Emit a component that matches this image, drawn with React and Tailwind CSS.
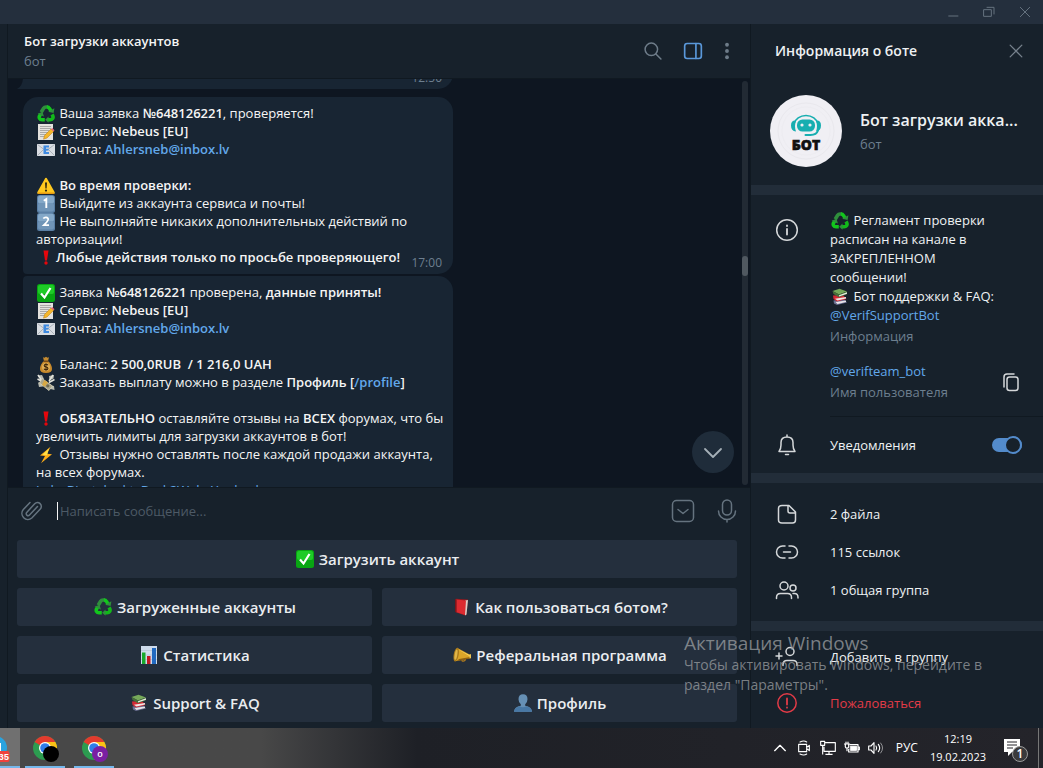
import React from "react";

const glyphs = {
  recycle: (
    <g fill="none" strokeWidth="3.6">
      <path d="M4.2 7.2 6.6 3.2Q7.4 2 9 2h2" stroke="#2f8f3c" />
      <path d="M10 2q1.6 0 2.6 1.6l1.7 2.8" stroke="#12c61c" />
      <path d="M15 9.5l.8 1.4q.7 1.5-.3 2.9-.7 1-2.3 1H10.6" stroke="#12b81a" />
      <path d="M7.8 14.8H5q-1.700 0-2.500-1.500-.6-1.200.1-2.500l1-1.700" stroke="#12c61c" />
      <path d="M11.500 11.500v6.300L8.200 14.700z" fill="#2f8f3c" stroke="none" />
      <path d="M11.200 6.800l5.400 1.300.8-4.800z" fill="#2f8f3c" stroke="none" />
      <path d="M.6 8.700 5.500 6.700l1.400 4.700z" fill="#2f8f3c" stroke="none" />
    </g>
  ),
  memo: (
    <>
      <path d="M1 1h15v16H1z" fill="#e4e2de" />
      <path d="M3 3.500h11M3 5.500h11M3 7.500h9M3 9.500h8M3 11.500h6M3 13.500h5" stroke="#9a9a9a" strokeWidth=".8" />
      <path d="M7.500 12.500 14 6l2.500 2.500L10 15l-3.500 1.200z" fill="#f5b62b" stroke="#b87a12" strokeWidth=".5" />
      <path d="M14 6l1.300-1 2.200 2.200-1 1.300z" fill="#e2647a" />
    </>
  ),
  mail: (
    <>
      <path d="M0 3h18v12H0z" fill="#d9dde2" />
      <path d="M.5 3.500 9 10l8.500-6.500M.5 14.500l6-6M17.500 14.500l-6-6" stroke="#9fa6ae" fill="none" strokeWidth=".8" />
      <path d="M6.500 4.500h5.500v2H9v1.200h2.600v1.900H9v1.300h3v2H6.500z" fill="#3f8ae0" />
    </>
  ),
  warning: (
    <>
      <path d="M9 .8Q9.800.8 10.300 2l7.300 13q.7 2-1 2H1.400q-1.700 0-1-2L7.700 2Q8.200.8 9 .8z" fill="#ffc81e" />
      <path d="M1 15.500h16L17 17H1z" fill="#e69a10" />
      <path d="M8 5.500h2l-.4 6H8.400z" fill="#2b2410" />
      <circle cx="9" cy="13.600" r="1.100" fill="#2b2410" />
    </>
  ),
  one: (
    <>
      <rect width="18" height="18" rx="2.500" fill="#5a7fa5" />
      <rect x="1" y=".8" width="16" height="8" rx="2" fill="#84a8c8" />
      <rect x="1" y="8" width="16" height="8.500" rx="2" fill="#7095b8" />
      <path d="M6.800 5.800 9.300 4v9" fill="none" stroke="#fff" strokeWidth="1.900" />
    </>
  ),
  two: (
    <>
      <rect width="18" height="18" rx="2.500" fill="#5a7fa5" />
      <rect x="1" y=".8" width="16" height="8" rx="2" fill="#84a8c8" />
      <rect x="1" y="8" width="16" height="8.500" rx="2" fill="#7095b8" />
      <path d="M6.300 5.500Q7.300 4.200 9 4.300q2.300.2 2.200 2.200Q11.100 8 6.800 12.200H12" fill="none" stroke="#fff" strokeWidth="1.700" />
    </>
  ),
  bang: (
    <>
      <path d="M6.500 1.500h5L10 11.500H8z" fill="#e5060c" />
      <circle cx="9" cy="14" r="1.700" fill="#e5060c" />
    </>
  ),
  check: (
    <>
      <rect width="18" height="18" rx="2.500" fill="#08a512" />
      <rect x="1" y="1" width="16" height="9" rx="2" fill="#1ecb27" />
      <path d="M4 9.500 7.500 13.500 13.500 4" fill="none" stroke="#fff" strokeWidth="2.200" />
    </>
  ),
  money: (
    <>
      <path d="M6 1.200 7.500 1.700 9 .8l1.500.9L12 1.200 11 5H7z" fill="#c58b30" />
      <path d="M7 5h4q4 3.500 4 8 0 4-6 4t-6-4q0-4.500 4-8z" fill="#c88a2c" />
      <path d="M6.500 5.200h5" stroke="#684018" strokeWidth="1.300" />
      <circle cx="9" cy="11" r="4" fill="#e0ae55" />
      <path d="M11 9.300q-.5-1-2-1-1.800 0-1.800 1.300T9 11t1.900 1.400Q10.900 13.700 9 13.700q-1.600 0-2-1M9 7.300v7.400" fill="none" stroke="#42290c" strokeWidth="1.100" />
    </>
  ),
  wings: (
    <>
      <path d="M.5 1.500 5 1l2 4-3 1zM12 2l5-1-.5 3.500-4 2zM1 8.500l4 0 1 4-4 .5zM12 11l5 1 .5 4-4-1z" fill="#b9bbb0" />
      <path d="M1 1l4 6M16 1l-4 6M.5 5 6 8M17.500 5.500 12 8.500" stroke="#e3e3dc" strokeWidth="1.500" />
      <path d="M5 4.500 15.500 12 12 16.500 2.500 9z" fill="#a9a58c" stroke="#d9d5bd" strokeWidth=".8" />
      <path d="M7.300 6 5 10.800l2.800 2 3.400-4.200z" fill="#d6a945" />
      <circle cx="10.800" cy="11.800" r="1.600" fill="#6f6a50" />
    </>
  ),
  zap: (
    <>
      <path d="M13.500.8 3 9.600l5 .5L4 17.300 15 8.200l-5-.4z" fill="#ffae17" />
      <path d="M12 2.500 5.500 8.700l4.500.6z" fill="#ffe04a" />
    </>
  ),
  books: (
    <>
      <path d="M2.500 12.500 13 11l3 3.500L6 17 3 15.500z" fill="#6a6f91" />
      <path d="M4.500 14 15 12.500v1.500L6.500 16z" fill="#e9e6ea" />
      <path d="M2 7.500 12 7l3.500 4L6 13.500 2.500 11z" fill="#d32a35" />
      <path d="M4 10.800 15 9v1.600l-8.500 2z" fill="#f2e7e4" />
      <path d="M1.500 3 8.500.8 16 3.500 8 6.500z" fill="#76a95a" />
      <path d="M1.500 3 8 6.500 16 3.500v2.700L8 9.200 2.500 6z" fill="#47703a" />
      <path d="M8 7.200 16 4.300v1.500L8 8.600z" fill="#e9eee3" />
    </>
  ),
  book: (
    <>
      <path d="M3 1.500 4 .8l12 .7-1.500 15L13 17.500 3 14z" fill="#8e1a20" />
      <path d="M13 2.500 16 2l-1.500 14.500L13 17.500z" fill="#d9cfc8" />
      <path d="M4 1.500 14 2.500 13 17 4 14z" fill="#dc2a30" />
      <path d="M4 1.500v12.500" stroke="#6b1015" />
    </>
  ),
  chart: (
    <>
      <path d="M1 0h16v18H1z" fill="#cfdcec" />
      <path d="M1 4.500h16M1 9h16M1 13.500h16" stroke="#aebed2" strokeWidth=".6" />
      <path d="M2 6.500h3.500V18H2z" fill="#18a82c" />
      <path d="M7 10h3.500v8H7z" fill="#c21723" />
      <path d="M12 2h4v16h-4z" fill="#2169c0" />
    </>
  ),
  horn: (
    <>
      <path d="M9 11.500v3.200q1.500 1 3.200-.6v-2" fill="none" stroke="#b07a1e" strokeWidth="1.300" />
      <path d="M4 1.800 17.500 9v3L2.500 15.300Z" fill="#dba528" />
      <path d="M4.500 3 17 9.500l.2 1z" fill="#ffe474" />
      <path d="M6 13 17.500 11v1.500L4 15z" fill="#8d5f12" />
      <ellipse cx="3.200" cy="8.600" rx="2.500" ry="7" fill="#a8791b" transform="rotate(10 3.200 8.600)" />
      <ellipse cx="3" cy="8.700" rx="1.300" ry="5.200" fill="#e0b548" transform="rotate(10 3 8.700)" />
      <path d="M16.500 8.300h1.500v4h-1.500z" fill="#efc550" />
    </>
  ),
  person: (
    <>
      <path d="M9 .2q4.500 0 4.500 5 0 3-2.300 5v1.600q6.500 1 6.800 6H0q.3-5 6.800-6v-1.600q-2.300-2-2.300-5 0-5 4.500-5z" fill="#6690b5" />
      <path d="M0 17.800q.3-4 5.500-5.500 3.500 2 7 0 5.200 1.500 5.500 5.500z" fill="#4878a5" />
    </>
  ),
};

function Emoji({ name }) {
  return (
    <svg viewBox="0 0 18 18" aria-hidden="true" className="mx-px -my-1 inline-block size-[18px] shrink-0 align-[-1px]">
      {glyphs[name]}
    </svg>
  );
}

function Icon({ children, className = "", size = "size-6" }) {
  return (
    <svg viewBox="0 0 24 24" aria-hidden="true" fill="none" stroke="currentColor" strokeWidth="1.500" strokeLinecap="round" strokeLinejoin="round" className={`block shrink-0 ${size} ${className}`}>
      {children}
    </svg>
  );
}

function Link({ children }) {
  return <a href="#" className="text-[#62a8ea]">{children}</a>;
}

function B({ children }) {
  return <b className="font-semibold">{children}</b>;
}

function Line({ children }) {
  return <div className="h-[18px] whitespace-pre">{children}</div>;
}

function TitleBar() {
  return (
    <div className="flex h-6 shrink-0 items-center justify-end bg-[#242f3d] text-[#65727f]">
      <button aria-label="Свернуть" className="flex w-9 justify-center">
        <Icon size="size-4"><path d="M5 18h15" strokeLinecap="butt" /></Icon>
      </button>
      <button aria-label="Развернуть" className="flex w-9 justify-center">
        <Icon size="size-4"><path d="M4.500 8.500h11v10h-11zM9 5h10.500v10" /></Icon>
      </button>
      <button aria-label="Закрыть" className="flex w-9 justify-center">
        <Icon size="size-4"><path d="m5 5 14 14M19 5 5 19" /></Icon>
      </button>
    </div>
  );
}

function ChatHeader() {
  return (
    <header className="flex h-[55px] shrink-0 items-center border-b border-[#101921] bg-[#17212b] pr-[9px] pl-4">
      <div className="min-w-0 flex-1 leading-5">
        <h1 className="font-semibold">Бот загрузки аккаунтов</h1>
        <p className="text-[#6d7f8f]">бот</p>
      </div>
      <div className="flex items-center text-[#6e7c89]">
        <button aria-label="Поиск" className="flex w-10 justify-center">
          <Icon size="size-5"><circle cx="10" cy="10" r="7.500" strokeWidth="1.800" /><path d="m15.500 15.500 6 6" strokeWidth="1.800" /></Icon>
        </button>
        <button aria-label="Боковая панель" className="flex w-10 justify-center text-[#5a98da]">
          <Icon size="size-5"><rect x="2" y="3" width="20" height="18" rx="3" strokeWidth="2" /><path d="M15.500 3v18" strokeWidth="2" /></Icon>
        </button>
        <button aria-label="Меню" className="flex w-7 justify-center">
          <Icon size="size-5"><g fill="currentColor" stroke="none"><circle cx="12" cy="4.500" r="2.300" /><circle cx="12" cy="12" r="2.300" /><circle cx="12" cy="19.500" r="2.300" /></g></Icon>
        </button>
      </div>
    </header>
  );
}

function Time({ children }) {
  return <time className="absolute right-[11px] bottom-[3px] text-[12px] leading-4 text-[#6d7f8f]">{children}</time>;
}

function Messages() {
  return (
    <div className="relative flex min-h-0 flex-1 bg-[#0e1621]">
      <div className="h-0 min-h-full min-w-0 flex-1 overflow-hidden pl-[15px]">
        <article className="relative -mt-[30px] h-10 w-[430px] rounded-br-[15px] bg-[#182533]">
          <svg viewBox="0 0 6 12" aria-hidden="true" className="absolute bottom-0 -left-1.5 h-3 w-1.5"><path d="M6 0Q6 9 0 12H6z" fill="#182533" /></svg>
          <Time>12:50</Time>
        </article>
        <article className="relative mt-2 w-[430px] rounded-[15px] rounded-bl-[4px] bg-[#182533] px-[13px] pt-[7px] pb-2">
          <Line><Emoji name="recycle" /> Ваша заявка <B>№648126221</B>, проверяется!</Line>
          <Line><Emoji name="memo" /> Сервис: <B>Nebeus [EU]</B></Line>
          <Line><Emoji name="mail" /> Почта: <B><Link>Ahlersneb@inbox.lv</Link></B></Line>
          <Line />
          <Line><Emoji name="warning" /> <B>Во время проверки:</B></Line>
          <Line><Emoji name="one" /> Выйдите из аккаунта сервиса и почты!</Line>
          <Line><Emoji name="two" /> Не выполняйте никаких дополнительных действий по</Line>
          <Line>авторизации!</Line>
          <Line><Emoji name="bang" /><B>Любые действия только по просьбе проверяющего!</B></Line>
          <Time>17:00</Time>
        </article>
        <article className="mt-0.5 w-[430px] rounded-[15px] rounded-tl-[4px] bg-[#182533] px-[13px] pt-[7px] pb-2">
          <Line><Emoji name="check" /> Заявка <B>№648126221</B> проверена, <B>данные приняты!</B></Line>
          <Line><Emoji name="memo" /> Сервис: <B>Nebeus [EU]</B></Line>
          <Line><Emoji name="mail" /> Почта: <B><Link>Ahlersneb@inbox.lv</Link></B></Line>
          <Line />
          <Line><Emoji name="money" /> Баланс: <B>2 500,0RUB  / 1 216,0 UAH</B></Line>
          <Line><Emoji name="wings" /> Заказать выплату можно в разделе <B>Профиль [<Link>/profile</Link>]</B></Line>
          <Line />
          <Line><Emoji name="bang" /> <B>ОБЯЗАТЕЛЬНО</B> оставляйте отзывы на <B>ВСЕХ</B> форумах, что бы</Line>
          <Line>увеличить лимиты для загрузки аккаунтов в бот!</Line>
          <Line><Emoji name="zap" /> Отзывы нужно оставлять после каждой продажи аккаунта,</Line>
          <Line>на всех форумах.</Line>
          <Line><Link>Lolz</Link>, <Link>Bigstalnokt</Link>, <Link>Dark2Web</Link>, <Link>Youhack</Link></Line>
        </article>
      </div>
      <div className="mt-0.5 mr-0.5 mb-0.5 w-1.5 rounded-full bg-[#222a34] pt-[175px]">
        <div className="h-5 w-full rounded-full bg-[#505860]" />
      </div>
      <button aria-label="Вниз" className="absolute right-4 bottom-3.5 flex size-[42px] items-center justify-center rounded-full bg-[#1f2c3a] text-[#a6b0b8]">
        <Icon><path d="m4 9 8 8 8-8" strokeWidth="1.800" /></Icon>
      </button>
    </div>
  );
}

function Composer() {
  return (
    <div className="flex h-[53px] shrink-0 items-center border-t border-[#101921] bg-[#17212b] pr-[11px] pb-1.5 pl-3 text-[#65737f]">
      <button aria-label="Прикрепить файл" className="mr-[13px]">
        <Icon><path d="m17.500 7.500-8 8.500a1.900 1.900 0 0 1-2.800-2.600l8-8.600a3.800 3.800 0 0 1 5.600 5.200L11.800 19a6 6 0 0 1-8.500-8.400L10 3.500" /></Icon>
      </button>
      <span className="h-[18px] w-px bg-[#f5f5f5]" />
      <input aria-label="Написать сообщение" placeholder="Написать сообщение..." className="ml-0.5 min-w-0 flex-1 bg-transparent outline-none placeholder:text-[#4d5a66]" />
      <button aria-label="Команды" className="mr-5">
        <Icon><rect x="1.500" y="1.500" width="21" height="21" rx="4" /><path d="m7 10.500 5 4 5-4" /></Icon>
      </button>
      <button aria-label="Голосовое сообщение">
        <Icon><rect x="7.500" y="1" width="9" height="15" rx="4.500" /><path d="M3.500 12a8.500 8.500 0 0 0 17 0M12 20.500V23" /></Icon>
      </button>
    </div>
  );
}

const keys = [
  ["recycle", "Загруженные аккаунты"],
  ["book", "Как пользоваться ботом?"],
  ["chart", "Статистика"],
  ["horn", "Реферальная программа"],
  ["books", "Support & FAQ"],
  ["person", "Профиль"],
];

function Key({ emoji, label, wide }) {
  return (
    <button className={`flex h-[38px] items-center justify-center gap-1 rounded-[3px] bg-[#242f3d] text-[15px] font-semibold text-[#eaedf0] ${wide ? "col-span-2" : ""}`}>
      <Emoji name={emoji} />
      <span className="whitespace-nowrap">{label}</span>
    </button>
  );
}

function Keyboard() {
  return (
    <div className="grid shrink-0 grid-cols-2 gap-2.5 bg-[#17212b] pr-[13px] pb-1.5 pl-[9px]">
      <Key emoji="check" label="Загрузить аккаунт" wide />
      {keys.map(([emoji, label]) => <Key key={label} emoji={emoji} label={label} />)}
    </div>
  );
}

function Row({ icon, children, className = "" }) {
  return (
    <button className={`flex w-full items-center gap-[31px] pl-6 text-left ${className}`}>
      {icon}
      <span>{children}</span>
    </button>
  );
}

function Avatar() {
  return (
    <svg viewBox="0 0 72 72" role="img" aria-label="БОТ" className="size-[72px] shrink-0">
      <circle cx="36" cy="36" r="36" fill="#f0eff4" />
      <circle cx="36" cy="36" r="28" fill="none" stroke="#e9e8ed" />
      <circle cx="36" cy="36" r="24" fill="none" stroke="#edecf1" />
      <path d="M24 29a12.200 10.300 0 0 1 24 0" fill="none" stroke="#17aeb0" strokeWidth="1.600" />
      <rect x="27" y="24.500" width="18" height="12" rx="5.500" fill="#17aeb0" />
      <circle cx="32" cy="30" r="1.600" fill="#f0eff4" /><circle cx="40" cy="30" r="1.600" fill="#f0eff4" />
      <path d="M26 25.500q-5-.5-5 5t5 6q-2-5.500 0-11zM46 25.500q5-.5 5 5t-5 6q2-5.500 0-11z" fill="#17aeb0" />
      <path d="M48 35.500q-1.500 4.500-7.500 4.500h-5" fill="none" stroke="#17aeb0" strokeWidth="2" strokeLinecap="round" />
      <text x="36" y="55" textAnchor="middle" stroke="#111" strokeWidth=".6" className="fill-[#111] font-['Open_Sans'] text-[14px] font-extrabold">БОТ</text>
    </svg>
  );
}

function Divider() {
  return <div className="h-2.5 shrink-0 bg-[#222d39]" />;
}

function InfoPanel() {
  return (
    <aside className="flex w-[293px] shrink-0 flex-col border-l border-[#101921] bg-[#17212b] text-[#eef1f3]">
      <div className="flex h-[53px] items-center pr-[17px] pl-6">
        <h2 className="flex-1 text-[14px] font-semibold">Информация о боте</h2>
        <button aria-label="Закрыть панель" className="text-[#77828d]">
          <Icon size="size-5"><path d="m5 5 14 14M19 5 5 19" /></Icon>
        </button>
      </div>
      <div className="flex h-[108px] items-start gap-[18px] pt-[18px] pl-[19px]">
        <Avatar />
        <div className="min-w-0 flex-1 pt-3">
          <h3 className="text-[16px] leading-[26px] font-semibold">Бот загрузки акка...</h3>
          <p className="leading-[22px] text-[#6d7f8f]">бот</p>
        </div>
      </div>
      <Divider />
      <section className="flex gap-[31px] pt-4 pl-6">
        <Icon className="mt-[7px] text-[#d5d8da]"><circle cx="12" cy="12" r="10.300" /><path d="M12 11v5.500M12 7.500v.5" strokeWidth="1.800" /></Icon>
        <div className="min-w-0 flex-1">
          <p className="whitespace-pre leading-[19px]"><Emoji name="recycle" /> Регламент проверки{"\n"}расписан на канале в{"\n"}ЗАКРЕПЛЕННОМ{"\n"}сообщении!{"\n"}<Emoji name="books" /> Бот поддержки &amp; FAQ:{"\n"}<Link>@VerifSupportBot</Link></p>
          <p className="leading-[23px] text-[#6d7f8f]">Информация</p>
          <div className="mt-[13px] flex items-center border-b border-[#101921] pr-5 pb-[13px]">
            <div className="flex-1 leading-[21px]">
              <Link>@verifteam_bot</Link>
              <p className="text-[#6d7f8f]">Имя пользователя</p>
            </div>
            <button aria-label="Копировать" className="text-[#d5d8da]">
              <Icon><rect x="8" y="7" width="11" height="13.500" rx="2.500" /><path d="M5 17V7q0-3 3-3h7" /></Icon>
            </button>
          </div>
        </div>
      </section>
      <label className="flex h-14 shrink-0 items-center pr-[21px] pl-6">
        <Icon className="mr-[31px] text-[#d5d8da]"><path d="M4 18.500Q6 16 6 12V9.500Q6 4 12 4t6 5.500V12q0 4 2 6.500zM12 4V2M10.500 21.500h3" /></Icon>
        <span className="flex-1">Уведомления</span>
        <input type="checkbox" defaultChecked className="peer sr-only" />
        <span className="flex h-[14px] w-[30px] items-center justify-end rounded-full bg-[#538bcb]">
          <span className="size-[18px] shrink-0 rounded-full border-2 border-[#538bcb] bg-[#17212b]" />
        </span>
      </label>
      <Divider />
      <nav className="flex h-[138px] shrink-0 flex-col pt-3">
        <Row className="h-[38px]" icon={<Icon className="text-[#d5d8da]"><path d="M7 3.500h7L20.500 10v8q0 3-3 3H7q-3.500 0-3.500-3V6.500q0-3 3.500-3zM13 3.500V9q0 2 2 2h5.500" /></Icon>}>2 файла</Row>
        <Row className="h-[38px]" icon={<Icon className="text-[#d5d8da]"><path d="M10 6H7.500a6 6 0 0 0 0 12H10M14 6h2.500a6 6 0 0 1 0 12H14M8.500 12h7" /></Icon>}>115 ссылок</Row>
        <Row className="h-[38px]" icon={<Icon className="text-[#d5d8da]"><circle cx="9" cy="8" r="4" /><circle cx="18" cy="10" r="3" /><path d="M1.500 20.500v-1q0-4 4-4h7q4 0 4 4v1M18 15.500h1.500q3.500 0 3.500 4v.5" /></Icon>}>1 общая группа</Row>
      </nav>
      <Divider />
      <nav className="flex flex-1 flex-col pt-[3px]">
        <Row className="h-[46px]" icon={<Icon className="text-[#d5d8da]"><circle cx="15" cy="6.500" r="4" /><path d="M1 11h6M4 8v6M8 20.500v-1q0-4 4-4h6q4 0 4 4v1" /></Icon>}>Добавить в группу</Row>
        <Row className="h-[46px] text-[#e23b47]" icon={<Icon><circle cx="12" cy="12" r="9.200" /><path d="M12 7.500v6M12 16.500v.2" strokeWidth="1.800" /></Icon>}>Пожаловаться</Row>
      </nav>
    </aside>
  );
}

function Chrome({ children }) {
  return (
    <svg viewBox="0 0 28 28" aria-hidden="true" className="size-7">
      <circle cx="12" cy="12" r="12" fill="#2c9c50" />
      <path d="M12 12 1.600 6A12 12 0 0 1 22.400 6z" fill="#e33b2e" />
      <path d="M12 6h10.400A12 12 0 0 1 12 24l5.200-9z" fill="#fbc116" />
      <circle cx="12" cy="12" r="6" fill="#fff" />
      <circle cx="12" cy="12" r="4.800" fill="#2f7de9" />
      {children}
    </svg>
  );
}

function Taskbar() {
  return (
    <footer className="flex h-10 shrink-0 items-stretch bg-linear-to-r from-[#484848] from-25% via-[#1e2026] via-40% to-[#24242a] text-[12px] text-white">
      <button aria-label="Telegram" className="w-5 overflow-hidden border-b-2 border-[#75b8ec] bg-[#707070]">
        <svg viewBox="0 0 20 38" aria-hidden="true" className="h-[38px] w-5">
          <circle cx="-5" cy="20" r="12" fill="#2aa3de" />
          <path d="M0 15h1v9h-1z" fill="#fff" />
          <rect x="-6" y="23" width="15.500" height="11" rx="2" fill="#f0413c" />
          <text x="-7" y="32" className="fill-white font-['Liberation_Mono'] text-[9px] font-bold">335</text>
        </svg>
      </button>
      <button aria-label="Chrome" className="ml-[5px] flex w-10 items-center justify-center border-b-2 border-[#75b8ec] pt-1.5 pl-1">
        <Chrome><circle cx="18" cy="18" r="8" fill="#000" /></Chrome>
      </button>
      <button aria-label="Chrome, профиль O" className="ml-[9px] flex w-10 items-center justify-center border-b-2 border-[#75b8ec] pt-1.5 pl-1">
        <Chrome><circle cx="18" cy="18" r="8" fill="#7a1fa2" /><text x="18" y="21" textAnchor="middle" className="fill-white font-['Open_Sans'] text-[9px] font-semibold">o</text></Chrome>
      </button>
      <div className="ml-auto flex items-center">
        <button aria-label="Скрытые значки" className="mr-2"><Icon size="size-4"><path d="m4 16 8-8 8 8" strokeWidth="2" /></Icon></button>
        <button aria-label="Камера" className="mr-2"><Icon size="size-4"><path d="M4 6.500h12v11H4zM16 11l4-3v8l-4-3M6 3q6-3 10 0M6 21q6 3 10 0" strokeWidth="1.700" /></Icon></button>
        <button aria-label="Сеть" className="mr-2"><Icon size="size-4"><path d="M8 4h15v13H6v-6M1 2h6v6H1zM4 8v13M9 21.500h9M13.500 17v4" strokeWidth="1.700" strokeLinecap="square" /></Icon></button>
        <button aria-label="Батарея" className="mr-2"><Icon size="size-4"><path d="M9 7h12v11H7v-4M21 10.500h2v4h-2" strokeWidth="1.800" /><path d="M10 9.500h9v6h-9z" fill="currentColor" /><path d="M0.500 6h8M2 6v4q0 2 2.500 2T7 10V6M3 3v3M6 3v3M4.500 12v4" strokeWidth="1.800" /></Icon></button>
        <button aria-label="Громкость" className="mr-3"><Icon size="size-4"><path d="M1 9v6h3.500L9 20V4L4.500 9zM12 9q2 3 0 6M15.500 6.500q4 5.500 0 11" strokeWidth="1.700" /><path d="M19 4.500q6 7.500 0 15" opacity=".5" /></Icon></button>
        <span className="mr-3">РУС</span>
        <time className="text-center text-[11px] leading-[18px]">12:19<br />19.02.2023</time>
        <button aria-label="Центр уведомлений" className="ml-[18px] pt-1">
          <svg viewBox="0 0 26 26" aria-hidden="true" className="size-[26px]">
            <path d="M0 2h16v13H8l-4 4v-4H0z" fill="#fff" />
            <path d="M3 5h10M3 8h10M3 11h6" stroke="#25252a" />
            <circle cx="16" cy="17" r="7.500" fill="#3a3a3c" stroke="#9b9b9b" />
            <text x="16" y="21" textAnchor="middle" className="fill-white font-['Open_Sans'] text-[12px] font-semibold">1</text>
          </svg>
        </button>
        <span className="mr-1 ml-2 h-10 w-px bg-[#777]" />
      </div>
    </footer>
  );
}

export default function App() {
  return (
    <div className="relative flex min-h-screen flex-col overflow-hidden bg-[#17212b] font-['Open_Sans','Noto_Sans',sans-serif] text-[13px] leading-[18px] text-[#f5f5f5]">
      <TitleBar />
      <div className="flex flex-1">
        <div className="w-2 shrink-0 border-r border-[#101921] bg-[#17212b]" />
        <main className="flex min-w-0 flex-1 flex-col">
          <ChatHeader />
          <Messages />
          <Composer />
          <Keyboard />
        </main>
        <InfoPanel />
      </div>
      <Taskbar />
      <div className="pointer-events-none absolute right-14 bottom-[73px] w-[303px] text-[14px] leading-5 text-[#9c9fa2]/75">
        <p className="text-[19px] leading-6">Активация Windows</p>
        <p>Чтобы активировать Windows, перейдите в раздел "Параметры".</p>
      </div>
    </div>
  );
}
